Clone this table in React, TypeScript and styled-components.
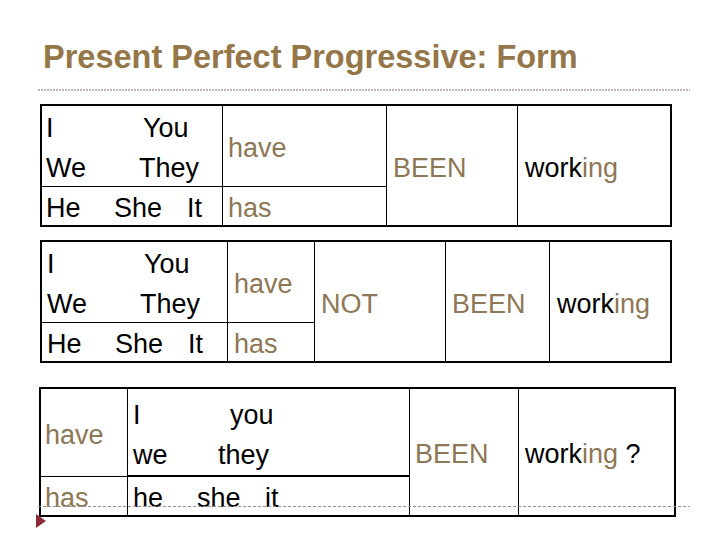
import React from "react";
import styled, { createGlobalStyle } from "styled-components";

const GlobalStyle = createGlobalStyle`
    html, body {
        margin: 0;
        padding: 0;
        background: #fff;
    }
    body {
        font-family: "Liberation Sans", Arial, sans-serif;
        color: #000;
    }
`;

const Slide = styled.div`
    position: relative;
    width: 728px;
    height: 546px;
    box-sizing: border-box;
    padding: 39px 0 0 40px;
    display: flex;
    flex-direction: column;
    align-items: flex-start;
    overflow: hidden;
`;

const Title = styled.h1`
    margin: 0 0 0 3px;
    font-size: 32.5px;
    line-height: 36px;
    font-weight: bold;
    color: #947648;
`;

const Rule = styled.div`
    margin: 14px 0 0 -2px;
    width: 652px;
    height: 2px;
    background: repeating-linear-gradient(90deg, #c4b3b3 0 2px, transparent 2px 3px);
`;

//━━━━━━━━━━━━━━━━━━━━━━━━━━━━━━━━━━━━
const Table = styled.div<{ $cols: string; $rows: string; $top: number; $shift?: number }>`
    display: grid;
    grid-template-columns: ${(p) => p.$cols};
    grid-template-rows: ${(p) => p.$rows};
    gap: 1px;
    margin-top: ${(p) => p.$top}px;
    margin-left: ${(p) => p.$shift || 0}px;
    background: #000;
    border: 2px solid #000;
    font-size: 27px;
    line-height: 40px;
`;

const Cell = styled.div<{ $span?: number; $pad?: number; $thick?: boolean }>`
    grid-row: span ${(p) => p.$span || 1};
    background: #fff;
    padding: 4px 0 0 ${(p) => (p.$pad === undefined ? 5 : p.$pad)}px;
    display: flex;
    flex-direction: column;
    justify-content: center;
    white-space: nowrap;
    box-shadow: ${(p) => (p.$thick ? "inset 0 -1px 0 #000" : "none")};
`;

const Line = styled.div<{ $tracks: string }>`
    display: grid;
    grid-template-columns: ${(p) => p.$tracks};
    height: 40px;
`;

const Gold = styled.span`
    color: #8d7754;
`;

//━━━━━━━━━━━━━━━━━━━━━━━━━━━━━━━━━━━━
const Footer = styled.div`
    position: absolute;
    left: 38px;
    top: 506px;
    width: 652px;
    height: 1px;
    background: repeating-linear-gradient(90deg, #9a8f8f 0 3px, transparent 3px 5px);
`;

const Marker = styled.div`
    position: absolute;
    left: 36px;
    top: 514px;
    width: 0;
    height: 0;
    border-top: 7px solid transparent;
    border-bottom: 7px solid transparent;
    border-left: 10px solid #8c2a38;
`;

const Working = ({ ask }: { ask?: boolean }) => (
    <span>
        work<Gold>ing</Gold>
        {ask ? " ?" : ""}
    </span>
);

function App() {
    return (
        <>
            <GlobalStyle />
            <Slide>
                <Title>Present Perfect Progressive: Form</Title>
                <Rule />

                <Table $cols="180px 163px 130px 152px" $rows="80px 38px" $top={13}>
                    <Cell $pad={4}>
                        <Line $tracks="97px auto">
                            <span>I</span>
                            <span>You</span>
                        </Line>
                        <Line $tracks="93px auto">
                            <span>We</span>
                            <span>They</span>
                        </Line>
                    </Cell>
                    <Cell><Gold>have</Gold></Cell>
                    <Cell $span={2} $pad={6}><Gold>BEEN</Gold></Cell>
                    <Cell $span={2} $pad={7}><Working /></Cell>
                    <Cell $pad={4}>
                        <Line $tracks="68px 73px auto">
                            <span>He</span>
                            <span>She</span>
                            <span>It</span>
                        </Line>
                    </Cell>
                    <Cell><Gold>has</Gold></Cell>
                </Table>

                <Table $cols="185px 86px 130px 103px 120px" $rows="80px 38px" $top={13}>
                    <Cell $pad={5}>
                        <Line $tracks="97px auto">
                            <span>I</span>
                            <span>You</span>
                        </Line>
                        <Line $tracks="93px auto">
                            <span>We</span>
                            <span>They</span>
                        </Line>
                    </Cell>
                    <Cell $pad={6}><Gold>have</Gold></Cell>
                    <Cell $span={2} $pad={6}><Gold>NOT</Gold></Cell>
                    <Cell $span={2} $pad={6}><Gold>BEEN</Gold></Cell>
                    <Cell $span={2} $pad={7}><Working /></Cell>
                    <Cell $pad={5}>
                        <Line $tracks="68px 73px auto">
                            <span>He</span>
                            <span>She</span>
                            <span>It</span>
                        </Line>
                    </Cell>
                    <Cell $pad={6}><Gold>has</Gold></Cell>
                </Table>

                <Table $cols="86px 281px 108px 155px" $rows="87px 38px" $top={24} $shift={-1}>
                    <Cell $pad={4}><Gold>have</Gold></Cell>
                    <Cell $thick>
                        <Line $tracks="97px auto">
                            <span>I</span>
                            <span>you</span>
                        </Line>
                        <Line $tracks="85px auto">
                            <span>we</span>
                            <span>they</span>
                        </Line>
                    </Cell>
                    <Cell $span={2} $pad={5}><Gold>BEEN</Gold></Cell>
                    <Cell $span={2} $pad={6}><Working ask /></Cell>
                    <Cell $pad={4}><Gold>has</Gold></Cell>
                    <Cell>
                        <Line $tracks="64px 68px auto">
                            <span>he</span>
                            <span>she</span>
                            <span>it</span>
                        </Line>
                    </Cell>
                </Table>

                <Footer />
                <Marker />
            </Slide>
        </>
    );
}

export default App;
